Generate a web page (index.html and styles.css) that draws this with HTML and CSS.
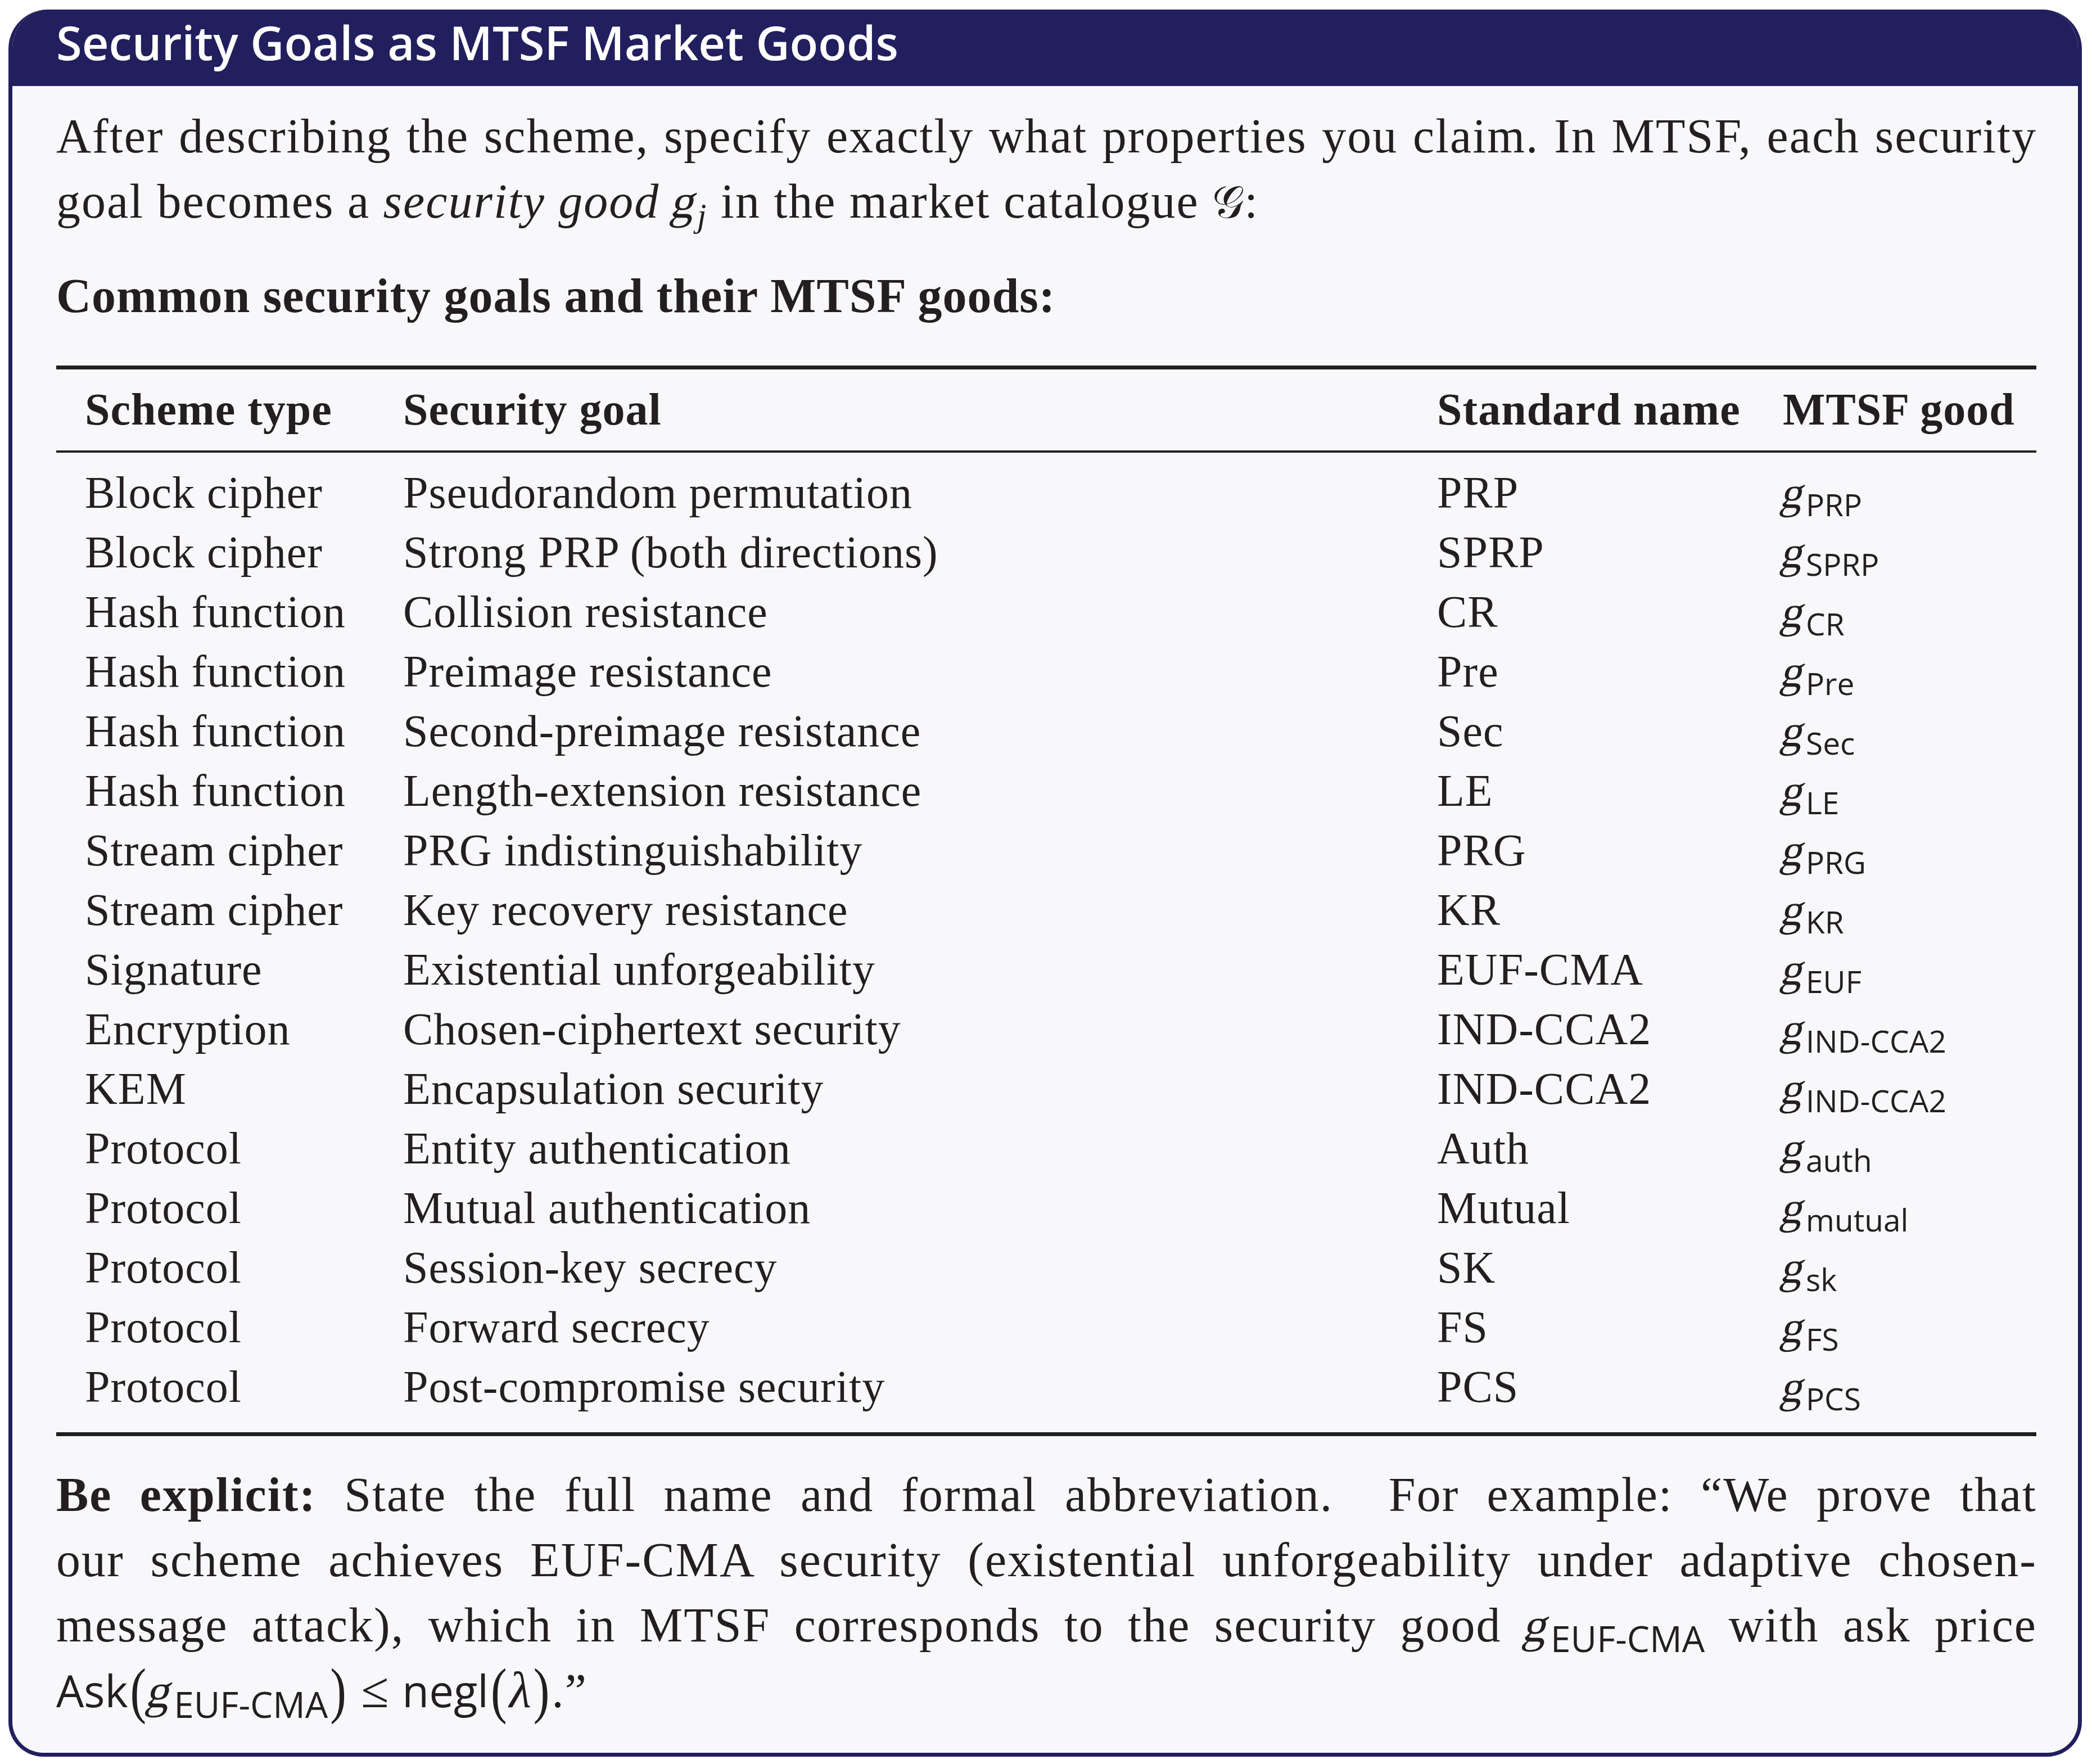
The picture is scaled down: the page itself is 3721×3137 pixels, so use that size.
FILE: index.html
```html
<!DOCTYPE html>
<html lang="en">
<head>
<meta charset="utf-8">
<title>Security Goals as MTSF Market Goods</title>
<link rel="stylesheet" href="styles.css">
</head>
<body>
<div class="box">
  <div class="head">Security Goals as MTSF Market Goods</div>
  <div class="content">
    <p class="para">
      <span class="ln">After describing the scheme, specify exactly what properties you claim. In MTSF, each security</span>
      <span class="ln last">goal becomes a <i>security good</i> <span class="mg"><span class="gi">g</span><sub class="sj">j</sub></span> in the market catalogue <span class="cal">𝒢</span>:</span>
    </p>
    <p class="subhead">Common security goals and their MTSF goods:</p>
    <table class="goods">
      <colgroup>
        <col class="c1"><col class="c2"><col class="c3"><col class="c4">
      </colgroup>
      <thead>
        <tr><th>Scheme type</th><th>Security goal</th><th>Standard name</th><th>MTSF good</th></tr>
      </thead>
      <tbody>
        <tr><td>Block cipher</td><td>Pseudorandom permutation</td><td>PRP</td><td><span class="mg"><span class="gi">g</span><sub class="ss">PRP</sub></span></td></tr>
        <tr><td>Block cipher</td><td>Strong PRP (both directions)</td><td>SPRP</td><td><span class="mg"><span class="gi">g</span><sub class="ss">SPRP</sub></span></td></tr>
        <tr><td>Hash function</td><td>Collision resistance</td><td>CR</td><td><span class="mg"><span class="gi">g</span><sub class="ss">CR</sub></span></td></tr>
        <tr><td>Hash function</td><td>Preimage resistance</td><td>Pre</td><td><span class="mg"><span class="gi">g</span><sub class="ss">Pre</sub></span></td></tr>
        <tr><td>Hash function</td><td>Second-preimage resistance</td><td>Sec</td><td><span class="mg"><span class="gi">g</span><sub class="ss">Sec</sub></span></td></tr>
        <tr><td>Hash function</td><td>Length-extension resistance</td><td>LE</td><td><span class="mg"><span class="gi">g</span><sub class="ss">LE</sub></span></td></tr>
        <tr><td>Stream cipher</td><td>PRG indistinguishability</td><td>PRG</td><td><span class="mg"><span class="gi">g</span><sub class="ss">PRG</sub></span></td></tr>
        <tr><td>Stream cipher</td><td>Key recovery resistance</td><td>KR</td><td><span class="mg"><span class="gi">g</span><sub class="ss">KR</sub></span></td></tr>
        <tr><td>Signature</td><td>Existential unforgeability</td><td>EUF-CMA</td><td><span class="mg"><span class="gi">g</span><sub class="ss">EUF</sub></span></td></tr>
        <tr><td>Encryption</td><td>Chosen-ciphertext security</td><td>IND-CCA2</td><td><span class="mg"><span class="gi">g</span><sub class="ss">IND-CCA2</sub></span></td></tr>
        <tr><td>KEM</td><td>Encapsulation security</td><td>IND-CCA2</td><td><span class="mg"><span class="gi">g</span><sub class="ss">IND-CCA2</sub></span></td></tr>
        <tr><td>Protocol</td><td>Entity authentication</td><td>Auth</td><td><span class="mg"><span class="gi">g</span><sub class="ss">auth</sub></span></td></tr>
        <tr><td>Protocol</td><td>Mutual authentication</td><td>Mutual</td><td><span class="mg"><span class="gi">g</span><sub class="ss">mutual</sub></span></td></tr>
        <tr><td>Protocol</td><td>Session-key secrecy</td><td>SK</td><td><span class="mg"><span class="gi">g</span><sub class="ss">sk</sub></span></td></tr>
        <tr><td>Protocol</td><td>Forward secrecy</td><td>FS</td><td><span class="mg"><span class="gi">g</span><sub class="ss">FS</sub></span></td></tr>
        <tr><td>Protocol</td><td>Post-compromise security</td><td>PCS</td><td><span class="mg"><span class="gi">g</span><sub class="ss">PCS</sub></span></td></tr>
      </tbody>
    </table>
    <p class="para explicit">
      <span class="ln"><b>Be explicit:</b> State the full name and formal abbreviation.&nbsp; For example: “We prove that</span>
      <span class="ln">our scheme achieves EUF-CMA security (existential unforgeability under adaptive chosen-</span>
      <span class="ln">message attack), which in MTSF corresponds to the security good <span class="mg"><span class="gi">g</span><sub class="bs">EUF-CMA</sub></span> with ask price</span>
      <span class="ln last"><span class="sf">Ask</span><span class="bp">(</span><span class="mg"><span class="gi">g</span><sub class="bs">EUF-CMA</sub></span><span class="bp">)</span><span class="rel">≤</span><span class="sf">negl</span><span class="bp">(</span><i class="lam">λ</i><span class="bp">)</span>.”</span>
    </p>
  </div>
</div>
</body>
</html>
```

FILE: styles.css
```css
html, body {
  margin: 0;
  padding: 0;
  background: #ffffff;
}

.box {
  margin: 17px 0 0 15px;
  width: 3688px;
  box-sizing: border-box;
  border: 7px solid #221f5e;
  border-top: 0;
  border-radius: 70px 70px 62px 62px;
  background: #f8f8fb;
  overflow: hidden;
  color: #231f20;
}

.head {
  height: 136px;
  background: #221f5e;
  color: #ffffff;
  font-family: "Open Sans", "Noto Sans", sans-serif;
  font-weight: 600;
  font-size: 83px;
  line-height: 116px;
  padding-left: 78px;
  white-space: nowrap;
}

.content {
  padding: 31px 73px 52px 78px;
  font-family: "Liberation Serif", "Times New Roman", serif;
  font-size: 86px;
  line-height: 116px;
  letter-spacing: 2px;
}

.para {
  margin: 0;
}

.ln {
  display: block;
  text-align: justify;
  text-align-last: justify;
  white-space: nowrap;
}

.ln.last {
  text-align-last: left;
}

.subhead {
  margin: 50px 0 0 0;
  font-weight: bold;
  letter-spacing: 1px;
}

.gi {
  display: inline-block;
  font-style: normal;
  letter-spacing: 0;
  transform: skewX(-14deg);
}

.sj {
  font-style: italic;
  font-size: 60px;
  line-height: 0;
  vertical-align: -16px;
}

.cal {
  font-family: "DejaVu Sans", "DejaVu Serif", serif;
  font-size: 80px;
  letter-spacing: 0;
}

.ss, .bs {
  font-family: "Open Sans", "Noto Sans", sans-serif;
  line-height: 0;
  letter-spacing: 0;
}

.ss {
  font-size: 55px;
  vertical-align: -15px;
  margin-left: 1px;
}

.bs {
  font-size: 64px;
  vertical-align: -19px;
  margin-left: 2px;
}

.sf {
  font-family: "Open Sans", "Noto Sans", sans-serif;
  font-size: 78px;
  letter-spacing: 0;
}

.bp {
  display: inline-block;
  font-size: 86px;
  line-height: 86px;
  letter-spacing: 0;
  transform: scaleY(1.28) translateY(-1px);
  margin: 0 4px;
}

.rel {
  font-size: 90px;
  letter-spacing: 0;
  margin: 0 24px 0 22px;
}

.lam {
  letter-spacing: 0;
  font-size: 90px;
}

.goods {
  margin-top: 66px;
  width: 3522px;
  table-layout: fixed;
  border-collapse: separate;
  border-spacing: 0;
  font-size: 80px;
  line-height: 106px;
  letter-spacing: 1px;
}

.c1 { width: 566px; }
.c2 { width: 1839px; }
.c3 { width: 615px; }
.c4 { width: 502px; }

.goods th,
.goods td {
  text-align: left;
  white-space: nowrap;
  padding: 0 0 0 51px;
  vertical-align: baseline;
}

.goods th {
  font-weight: bold;
  border-top: 7px solid #231f20;
  border-bottom: 4px solid #231f20;
  padding-top: 18px;
  padding-bottom: 20px;
}

.goods tbody tr:first-child td {
  padding-top: 18px;
}

.goods tbody tr:last-child td {
  padding-bottom: 28px;
  border-bottom: 7px solid #231f20;
}

.explicit {
  margin-top: 46px;
}
```
